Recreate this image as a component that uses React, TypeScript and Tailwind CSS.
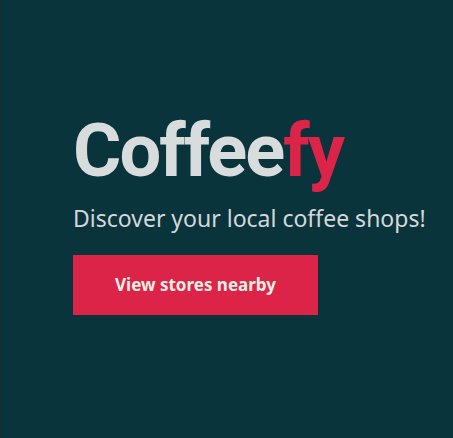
export default function App() {
  return (
    <div className="w-[453px] h-[438px] bg-[#0a343c] border-l border-[#1f2a2c] flex flex-col items-start pl-[72px] pt-[106px]">
      <h1 className="font-['Roboto',sans-serif] text-[74px] leading-[90px] font-bold tracking-[-2px] text-[#d8dcdd]">
        Coffee<span className="text-[#dc2448]">fy</span>
      </h1>
      <p className="mt-[7px] font-['Noto_Sans','Open_Sans',sans-serif] text-[23px] leading-[30px] text-[#d4d8d9]">
        Discover your local coffee shops!
      </p>
      <button className="mt-[22px] w-[245px] h-[60px] bg-[#dc2448] text-[#f3efe4] text-[17px] font-bold font-['Noto_Sans','Open_Sans',sans-serif]">
        View stores nearby
      </button>
    </div>
  );
}
